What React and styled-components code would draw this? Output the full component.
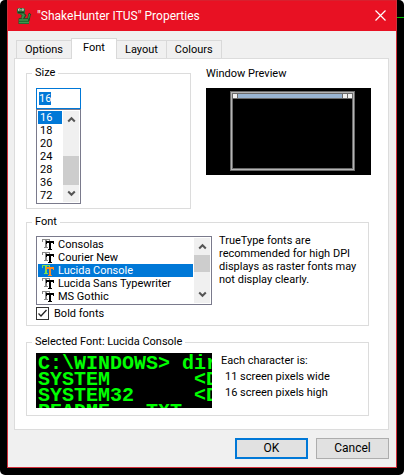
import React from "react";
import styled, { createGlobalStyle, css } from "styled-components";

const GlobalStyle = createGlobalStyle`
  *, *::before, *::after { box-sizing: border-box; }
  html { background: #fff; }
  body {
    margin: 0;
    color: #000;
    font: 11px/13px Roboto, "Liberation Sans", sans-serif;
  }
  button, input { font: inherit; color: inherit; }
`;

const Desktop = styled.div`
  display: flex;
  min-height: 100vh;
  padding: 0 7px 7px;
  border-radius: 5px;
  background-color: #000;
  /* thin accent of a window lying behind the dialog */
  background-image: linear-gradient(#00c000, #00c000);
  background-repeat: no-repeat;
  background-size: 7px 1px;
  background-position: right 0 top 17px;
`;

const Dialog = styled.main`
  flex: 1;
  display: flex;
  flex-direction: column;
  min-width: 0;
  border: 1px solid #d22f3a;
  border-top: 0;
  background: #f0f0f0;
`;

const TitleBar = styled.header`
  display: flex;
  align-items: center;
  height: 31px;
  padding: 0 8px 1px;
  gap: 5px;
  border-top: 1px solid #d8202e;
  background: #e81123;
  color: #fff;
`;

const Title = styled.h1`
  flex: 1;
  margin: 0;
  font-size: 12px;
  line-height: 16px;
  font-weight: 400;
`;

const IconButton = styled.button`
  display: grid;
  place-items: center;
  width: 16px;
  height: 16px;
  padding: 0;
  border: 0;
  background: transparent;
`;

const Body = styled.div`
  flex: 1;
  display: flex;
  flex-direction: column;
  padding: 7px 7px 8px 6px;
`;

const TabList = styled.div`
  display: flex;
  align-items: flex-end;
  padding-left: 2px;
`;

const Tab = styled.button`
  height: 18px;
  padding: 1px 8px 0;
  border: 1px solid #d9d9d9;
  border-width: 1px 1px 0 0;
  background: #f0f0f0;
  font-size: 11px;
  line-height: 16px;
  &:first-child { border-left-width: 1px; }
  ${(p) =>
    p.$active &&
    css`
      height: 21px;
      margin: 0 0 -1px -1px;
      padding: 0 11px 2px;
      border-left-width: 1px;
      background: #fff;
      z-index: 1;
    `}
`;

const Panel = styled.section`
  padding: 6px 17px 13px 11px;
  border: 1px solid #dcdcdc;
  background: #fff;
`;

const TopRow = styled.div`
  display: grid;
  grid-template-columns: 1fr 1fr;
  gap: 15px;
`;

const Group = styled.fieldset`
  min-width: 0;
  margin: 0;
  padding: 7px 9px 4px;
  border: 1px solid #dcdcdc;
`;

const WideGroup = styled(Group)`
  margin: ${(p) => p.$gap}px 2px 0 0;
  padding: ${(p) => p.$pad};
`;

const Legend = styled.legend`
  padding: 0 3px;
  margin-left: -4px;
  line-height: 16px;
`;

const SizeColumn = styled.div`
  display: flex;
  flex-direction: column;
  width: 45px;
`;

const SizeInput = styled.input`
  width: 100%;
  height: 21px;
  padding: 0 2px 1px;
  border: 1px solid #0078d7;
  border-radius: 0;
  outline: 0;
  background: #fff;
  &::selection { background: #0078d7; color: #fff; }
`;

const ListBox = styled.div`
  display: flex;
  gap: 1px;
  padding: 1px;
  border: 1px solid #7a7a8c;
  background: #fff;
`;

const Options = styled.ul`
  flex: 1;
  min-width: 0;
  margin: 0;
  padding: 0;
  list-style: none;
`;

const Option = styled.li`
  display: flex;
  align-items: center;
  gap: 3px;
  height: 13px;
  padding-left: ${(p) => p.$indent}px;
  line-height: 15px;
  white-space: nowrap;
  background: ${(p) => (p.$selected ? "#0078d7" : "transparent")};
  color: ${(p) => (p.$selected ? "#fff" : "#000")};
`;

const Track = styled.div`
  display: grid;
  grid-template-rows: ${(p) => p.$rows};
  width: 16px;
  background: #f0f0f0;
`;

const Thumb = styled.div`
  grid-row: 3;
  background: #cdcdcd;
`;

const ArrowButton = styled(IconButton)`
  grid-row: ${(p) => p.$row};
  height: 17px;
`;

const PreviewColumn = styled.section`
  display: flex;
  flex-direction: column;
  gap: 7px;
`;

const Caption = styled.h2`
  margin: 0;
  padding-top: 1px;
  font-size: 11px;
  line-height: 15px;
  font-weight: 400;
`;

const PreviewScreen = styled.div`
  display: grid;
  height: 87px;
  padding: 3px 16px 4px 24px;
  background: #000;
`;

const MiniWindow = styled.div`
  display: flex;
  flex-direction: column;
  padding: 2px;
  border: 1px solid #6a6a6a;
  background: #000;
  box-shadow: inset 0 0 0 1px #b4b4b4, inset 0 0 0 2px #6a6a6a;
`;

const MiniTitle = styled.div`
  display: grid;
  grid-template-columns: 4px 1fr 4px 4px;
  gap: 1px;
  height: 5px;
  padding-bottom: 1px;
  background: #6a6a6a;
`;

const MiniCell = styled.span`
  background: ${(p) => (p.$bar ? "#99b4d1" : "#f0f0f0")};
`;

const FontRow = styled.div`
  display: grid;
  grid-template-columns: 176px 1fr;
  column-gap: ${(p) => p.$gap}px;
`;

const Note = styled.p`
  margin: -2px 0 0;
`;

const CheckLabel = styled.label`
  display: flex;
  align-items: center;
  gap: 5px;
  width: max-content;
  margin-top: 2px;
`;

const CheckBox = styled.input`
  appearance: none;
  width: 13px;
  height: 13px;
  margin: 0;
  border: 1px solid #333;
  background: #fff;
  &:checked {
    background: #fff url("data:image/svg+xml,%3Csvg xmlns='http://www.w3.org/2000/svg' viewBox='0 0 11 11'%3E%3Cpath d='M1.5 5.5L4 8L9.5 2' fill='none' stroke='%23222' stroke-width='1.3'/%3E%3C/svg%3E");
  }
`;

const Console = styled.pre`
  height: 55px;
  margin: 0;
  padding: 3px 0 0 2px;
  overflow: hidden;
  background: #000;
  color: #00ff00;
  font: bold 20px/16px "Liberation Mono", monospace;
`;

const Metrics = styled.div`
  display: flex;
  flex-direction: column;
  line-height: 16px;
`;

const Metric = styled.span`
  padding-left: ${(p) => (p.$indent ? 4 : 0)}px;
`;

const Actions = styled.footer`
  display: flex;
  justify-content: flex-end;
  gap: 8px;
  padding-top: 8px;
`;

const PushButton = styled.button`
  width: 73px;
  height: 21px;
  padding: 0;
  border: ${(p) => (p.$primary ? "2px solid #0078d7" : "1px solid #adadad")};
  background: #e1e1e1;
  font-size: 12px;
`;

function SnakeIcon() {
  return (
    <svg width="16" height="18" viewBox="0 0 16 18" aria-hidden="true">
      <path d="M3 12.5h9.5l1-5 .8-.8" fill="none" stroke="#1d4a25" strokeWidth="2.6" />
      <path d="M2.5 11.5h10.5v5.5h-10.5z" fill="#1d5a2a" />
      <path d="M5 5.5l3.2 3-2.2 3.5" fill="none" stroke="#1d4a25" strokeWidth="3.6" />
      <path d="M5 5.5l2.8 3-1.8 3" fill="none" stroke="#3c8c48" strokeWidth="2" />
      <rect x="1" y="1" width="8" height="6" rx="2" fill="#2a6a35" />
      <path d="M2 5.5h6" stroke="#183c1e" strokeWidth="1" />
      <path d="M3 13h9M3 15.5h10" stroke="#3f9a4c" strokeWidth="1.3" />
      <path d="M12.6 11.5l.9-4.5" stroke="#3f9a4c" strokeWidth="1" />
      <circle cx="3.3" cy="2.8" r="1.3" fill="#d8e8d8" />
      <circle cx="6.8" cy="2.8" r="1.3" fill="#d8e8d8" />
      <rect x="3" y="2.5" width="1" height="1" fill="#123" />
      <rect x="6.5" y="2.5" width="1" height="1" fill="#123" />
    </svg>
  );
}

function TrueTypeIcon({ back, front }) {
  return (
    <svg width="13" height="13" viewBox="0 0 13 13" shapeRendering="crispEdges" aria-hidden="true">
      <path fill={back} d="M0 1h8v3h-1v-2h-2v7h1v1h-4v-1h1v-7h-2v2h-1z" />
      <path fill={front} d="M4 3h8v3h-1v-1h-2v6h1v1h-4v-1h1v-6h-2v1h-1z" />
    </svg>
  );
}

function Arrow({ down }) {
  return (
    <svg width="9" height="7" viewBox="0 0 9 7" aria-hidden="true">
      <path d={down ? "M1.2 1.5L4.5 4.8L7.8 1.5" : "M1.2 5.5L4.5 2.2L7.8 5.5"} fill="none" stroke="#555" strokeWidth="2" />
    </svg>
  );
}

function ScrollBar({ rows, label }) {
  return (
    <Track $rows={rows}>
      <ArrowButton $row={1} type="button" aria-label={`Scroll ${label} up`}><Arrow /></ArrowButton>
      <Thumb />
      <ArrowButton $row={5} type="button" aria-label={`Scroll ${label} down`}><Arrow down /></ArrowButton>
    </Track>
  );
}

const sizes = ["16", "18", "20", "24", "28", "36", "72"];
const fonts = ["Consolas", "Courier New", "Lucida Console", "Lucida Sans Typewriter", "MS Gothic"];
const sample = "C:\\WINDOWS> dir\nSYSTEM       <DIR>\nSYSTEM32     <DIR>\nREADME   TXT";

export default function App() {
  const sizeRef = React.useRef(null);
  const [size, setSize] = React.useState("16");
  const [font, setFont] = React.useState("Lucida Console");

  React.useEffect(() => {
    sizeRef.current.focus();
    sizeRef.current.select();
  }, []);

  return (
    <>
      <GlobalStyle />
      <Desktop>
        <Dialog>
          <TitleBar>
            <SnakeIcon />
            <Title>"ShakeHunter ITUS" Properties</Title>
            <IconButton type="button" aria-label="Close">
              <svg width="11" height="11" viewBox="0 0 11 11" aria-hidden="true">
                <path d="M.5.5l10 10M10.5.5l-10 10" stroke="#fff" strokeWidth="1.2" />
              </svg>
            </IconButton>
          </TitleBar>
          <Body>
            <TabList role="tablist">
              <Tab type="button" role="tab">Options</Tab>
              <Tab type="button" role="tab" aria-selected="true" $active>Font</Tab>
              <Tab type="button" role="tab">Layout</Tab>
              <Tab type="button" role="tab">Colours</Tab>
            </TabList>
            <Panel role="tabpanel">
              <TopRow>
                <Group>
                  <Legend>Size</Legend>
                  <SizeColumn>
                    <SizeInput ref={sizeRef} aria-label="Size" value={size} onChange={(e) => setSize(e.target.value)} />
                    <ListBox>
                      <Options role="listbox" aria-label="Sizes">
                        {sizes.map((s) => (
                          <Option key={s} role="option" aria-selected={s === size} $indent={2} $selected={s === size} onClick={() => setSize(s)}>
                            {s}
                          </Option>
                        ))}
                      </Options>
                      <ScrollBar rows="17px 28px 29px 1fr 17px" label="sizes" />
                    </ListBox>
                  </SizeColumn>
                </Group>
                <PreviewColumn>
                  <Caption>Window Preview</Caption>
                  <PreviewScreen>
                    <MiniWindow>
                      <MiniTitle>
                        <MiniCell />
                        <MiniCell $bar />
                        <MiniCell />
                        <MiniCell />
                      </MiniTitle>
                    </MiniWindow>
                  </PreviewScreen>
                </PreviewColumn>
              </TopRow>

              <WideGroup $gap={5} $pad="6px 9px 5px">
                <Legend>Font</Legend>
                <FontRow $gap={7}>
                  <ListBox>
                    <Options role="listbox" aria-label="Fonts">
                      {fonts.map((f) => (
                        <Option key={f} role="option" aria-selected={f === font} $indent={4} $selected={f === font} onClick={() => setFont(f)}>
                          <TrueTypeIcon back={f === font ? "#7fe04a" : "#8a8a8a"} front={f === font ? "#ff8a1e" : "#000"} />
                          {f}
                        </Option>
                      ))}
                    </Options>
                    <ScrollBar rows="17px 0 17px 1fr 17px" label="fonts" />
                  </ListBox>
                  <Note>TrueType fonts are recommended for high DPI displays as raster fonts may not display clearly.</Note>
                </FontRow>
                <CheckLabel>
                  <CheckBox type="checkbox" defaultChecked />
                  Bold fonts
                </CheckLabel>
              </WideGroup>

              <WideGroup $gap={8} $pad="3px 9px 7px">
                <Legend>Selected Font: {font}</Legend>
                <FontRow $gap={9}>
                  <Console>{sample}</Console>
                  <Metrics>
                    <Metric>Each character is:</Metric>
                    <Metric $indent>11 screen pixels wide</Metric>
                    <Metric $indent>16 screen pixels high</Metric>
                  </Metrics>
                </FontRow>
              </WideGroup>
            </Panel>
            <Actions>
              <PushButton type="button" $primary>OK</PushButton>
              <PushButton type="button">Cancel</PushButton>
            </Actions>
          </Body>
        </Dialog>
      </Desktop>
    </>
  );
}
